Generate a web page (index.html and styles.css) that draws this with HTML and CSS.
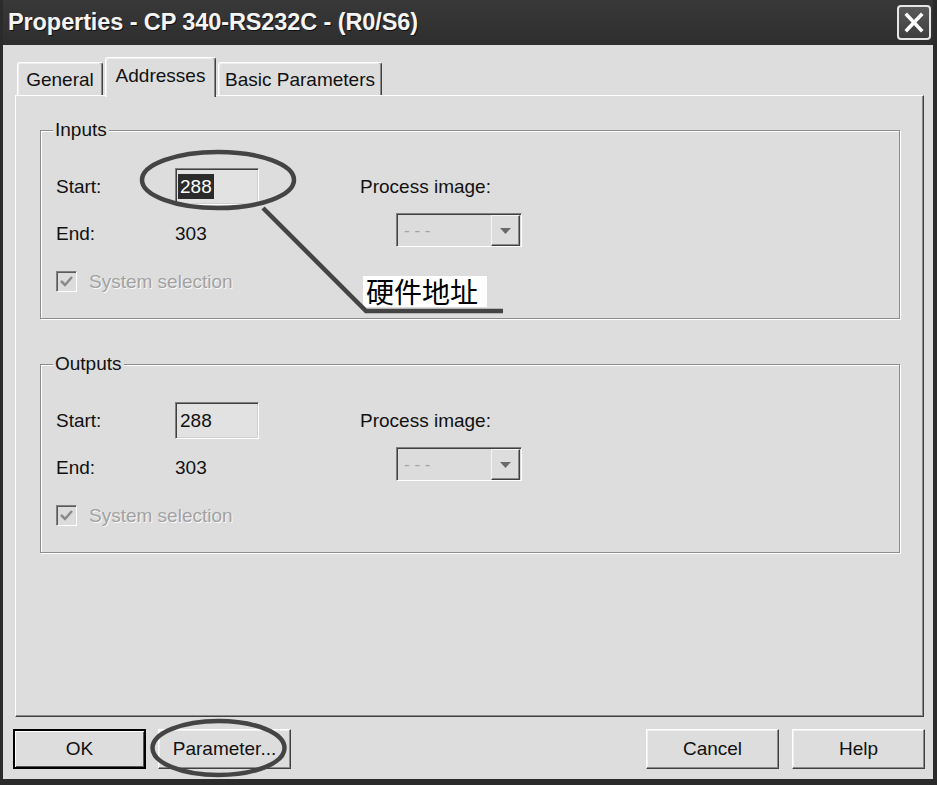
FILE: index.html
```html
<!DOCTYPE html>
<html lang="en">
<head>
  <meta charset="UTF-8" />
  <meta name="viewport" content="width=device-width, initial-scale=1.0" />
  <title>Properties - CP 340-RS232C - (R0/S6)</title>
  <link rel="stylesheet" href="styles.css">
</head>
<body>
  <div class="window">
    <div class="titlebar">
      <span class="title">Properties - CP 340-RS232C - (R0/S6)</span>
      <span class="close-btn">
        <svg viewBox="0 0 34 35" width="34" height="35"><path d="M9 9 L25 26 M25 9 L9 26" stroke="#fff" stroke-width="4" stroke-linecap="square" fill="none"/></svg>
      </span>
    </div>

    <div class="client">
      <div class="tabs">
        <div class="tab tab-general">General</div>
        <div class="tab tab-addr active">Addresses</div>
        <div class="tab tab-basic">Basic Parameters</div>
      </div>

      <div class="panel">
        <div class="group">
          <span class="caption">Inputs</span>
          <div class="fields">
            <span class="lbl">Start:</span>
            <span class="edit"><span class="sel">288</span></span>
            <span class="lbl span2">Process image:</span>
            <span class="lbl">End:</span>
            <span class="val">303</span>
            <span class="combo"><span class="combo-text">- - -</span><span class="arrow"><svg viewBox="0 0 11 6" width="11" height="6"><path d="M0 0 H11 L5.5 6 Z" fill="#6a6a6a"/></svg></span></span>
            <span class="checkrow"><span class="check"><svg viewBox="0 0 13 11" width="13" height="11"><path d="M1 5 L5 9 L12 1" stroke="#8a8a8a" stroke-width="2.5" fill="none"/></svg></span><span class="disabled">System selection</span></span>
          </div>
        </div>

        <div class="group second">
          <span class="caption">Outputs</span>
          <div class="fields">
            <span class="lbl">Start:</span>
            <span class="edit"><span class="plain">288</span></span>
            <span class="lbl span2">Process image:</span>
            <span class="lbl">End:</span>
            <span class="val">303</span>
            <span class="combo"><span class="combo-text">- - -</span><span class="arrow"><svg viewBox="0 0 11 6" width="11" height="6"><path d="M0 0 H11 L5.5 6 Z" fill="#6a6a6a"/></svg></span></span>
            <span class="checkrow"><span class="check"><svg viewBox="0 0 13 11" width="13" height="11"><path d="M1 5 L5 9 L12 1" stroke="#8a8a8a" stroke-width="2.5" fill="none"/></svg></span><span class="disabled">System selection</span></span>
          </div>
        </div>
      </div>

      <div class="buttons">
        <span class="btn default">OK</span>
        <span class="btn param">Parameter...</span>
        <span class="spacer"></span>
        <span class="btn">Cancel</span>
        <span class="btn help">Help</span>
      </div>
    </div>

    <div class="note">硬件地址</div>
    <svg class="marks" viewBox="0 0 937 785" width="937" height="785">
      <ellipse cx="218" cy="180" rx="76" ry="28" fill="none" stroke="#444" stroke-width="4.5"/>
      <polyline points="263,208 366,311 503,311" fill="none" stroke="#444" stroke-width="4.5"/>
      <ellipse cx="218.5" cy="748" rx="66" ry="27" fill="none" stroke="#444" stroke-width="4.5"/>
    </svg>
  </div>
</body>
</html>
```

FILE: styles.css
```css
body {
  margin: 0;
  background-color: #2b2b2b;
  font-family: 'Liberation Sans', Arial, sans-serif;
  font-size: 19px;
  color: #111;
}
.window {
  position: relative;
  width: 937px;
  height: 785px;
  box-sizing: border-box;
  padding: 0 4px 6px 3px;
  background-color: #2b2b2b;
  display: flex;
  flex-direction: column;
}
.titlebar {
  height: 45px;
  flex: none;
  display: flex;
  align-items: center;
  justify-content: space-between;
  padding: 0 2px 0 5px;
  background: linear-gradient(#383838, #2e2e2e);
}
.title {
  color: #f5f5f5;
  font-weight: bold;
  font-size: 23.5px;
  letter-spacing: -0.1px;
  text-shadow: 1px 1px 0 #111;
}
.close-btn {
  width: 34px;
  height: 35px;
  box-sizing: border-box;
  border: 2px solid #e6e6e6;
  border-radius: 4px;
  background: linear-gradient(#5a5a5a, #3e3e3e);
  display: flex;
  align-items: center;
  justify-content: center;
  overflow: hidden;
}
.client {
  flex: 1;
  background-color: #dddddd;
  padding: 12px 9px 0 12px;
  display: flex;
  flex-direction: column;
}

/* tabs */
.tabs {
  display: flex;
  align-items: flex-end;
  height: 38px;
  padding-left: 2px;
  gap: 2px;
  position: relative;
  z-index: 1;
}
.tab {
  height: 33px;
  box-sizing: border-box;
  display: flex;
  align-items: center;
  justify-content: center;
  padding-top: 2px;
  background-color: #dddddd;
  border-top: 1px solid #fff;
  border-left: 1px solid #fff;
  border-right: 1px solid #404040;
  border-radius: 3px 3px 0 0;
  box-shadow: inset -1px 0 #8a8a8a, inset 1px 1px #eeeeee;
}
.tab-general { width: 86px; }
.tab-addr { width: 111px; }
.tab-basic { width: 164px; }
.tab.active {
  height: 40px;
  margin-bottom: -2px;
  padding-top: 0;
  padding-bottom: 4px;
}

.panel {
  height: 622px;
  box-sizing: border-box;
  border: 1px solid;
  border-color: #fff #404040 #404040 #fff;
  box-shadow: inset -1px -1px #8a8a8a;
  padding: 34px 23px 0 24px;
}

/* group boxes */
.group {
  border: 1px solid #8c8c8c;
  box-shadow: inset 1px 1px #fff, 1px 1px #fff;
  padding: 0 15px 14px 15px;
}
.group.second {
  margin-top: 45px;
}
.caption {
  display: block;
  width: fit-content;
  margin: -12px 0 0 -3px;
  padding: 0 2px;
  line-height: 22px;
  background-color: #dddddd;
}
.fields {
  margin-top: 22px;
  display: grid;
  grid-template-columns: 119px 185px 36px 1fr;
  grid-template-rows: repeat(3, 47px);
  align-items: center;
}
.span2 { grid-column: 3 / 5; }
.edit {
  width: 84px;
  height: 37px;
  box-sizing: border-box;
  border: 1px solid;
  border-color: #808080 #fff #fff #808080;
  box-shadow: inset 1px 1px #404040, inset -1px -1px #d0d0d0;
  background-color: #e2e2e2;
  display: flex;
  align-items: center;
  padding-left: 2px;
}
.sel {
  background-color: #2b2b2b;
  color: #fff;
  line-height: 25px;
  padding: 0 2px;
}
.plain {
  padding: 0 2px;
  line-height: 25px;
}
.combo {
  grid-column: 4;
  align-self: start;
  margin-top: 3px;
  width: 126px;
  height: 34px;
  box-sizing: border-box;
  border: 1px solid;
  border-color: #808080 #fff #fff #808080;
  box-shadow: inset 1px 1px #404040;
  background-color: #dcdcdc;
  display: flex;
  align-items: stretch;
  justify-content: space-between;
  padding: 1px 1px 0 1px;
}
.combo-text {
  color: #a4a4a4;
  padding-left: 6px;
  display: flex;
  align-items: center;
  font-size: 17px;
}
.arrow {
  width: 29px;
  box-sizing: border-box;
  border: 1px solid;
  border-color: #f4f4f4 #404040 #404040 #f4f4f4;
  box-shadow: inset -1px -1px #8a8a8a;
  background-color: #dddddd;
  display: flex;
  align-items: center;
  justify-content: center;
}
.checkrow {
  grid-column: 1 / -1;
  display: flex;
  align-items: center;
  gap: 12px;
  margin-top: 2px;
}
.check {
  width: 21px;
  height: 21px;
  box-sizing: border-box;
  border: 1px solid;
  border-color: #808080 #fff #fff #808080;
  box-shadow: inset 1px 1px #5a5a5a;
  background-color: #dcdcdc;
  display: flex;
  align-items: center;
  justify-content: center;
}
.disabled {
  color: #a2a2a2;
  text-shadow: 1px 1px 0 #fafafa;
}

/* buttons */
.buttons {
  display: flex;
  height: 40px;
  margin: 12px -1px 0 -2px;
  gap: 13px;
}
.btn {
  width: 133px;
  box-sizing: border-box;
  display: flex;
  align-items: center;
  justify-content: center;
  border: 1px solid;
  border-color: #fff #404040 #404040 #fff;
  box-shadow: inset -1px -1px #8a8a8a, inset 1px 1px #f0f0f0;
  background-color: #dddddd;
}
.btn.default {
  border: 2px solid #000;
  box-shadow: inset 1px 1px #fff, inset -1px -1px #555;
}
.btn.param { margin-left: -1px; }
.spacer { flex: 1; }

/* annotations drawn over the screenshot */
.note {
  position: absolute;
  left: 363px;
  top: 276px;
  height: 31px;
  padding: 0 9px 0 3px;
  background-color: #fff;
  font-family: 'Noto Sans CJK SC', 'Liberation Sans', sans-serif;
  font-size: 28px;
  line-height: 31px;
  color: #000;
}
.marks {
  position: absolute;
  left: 0;
  top: 0;
  pointer-events: none;
}
```
